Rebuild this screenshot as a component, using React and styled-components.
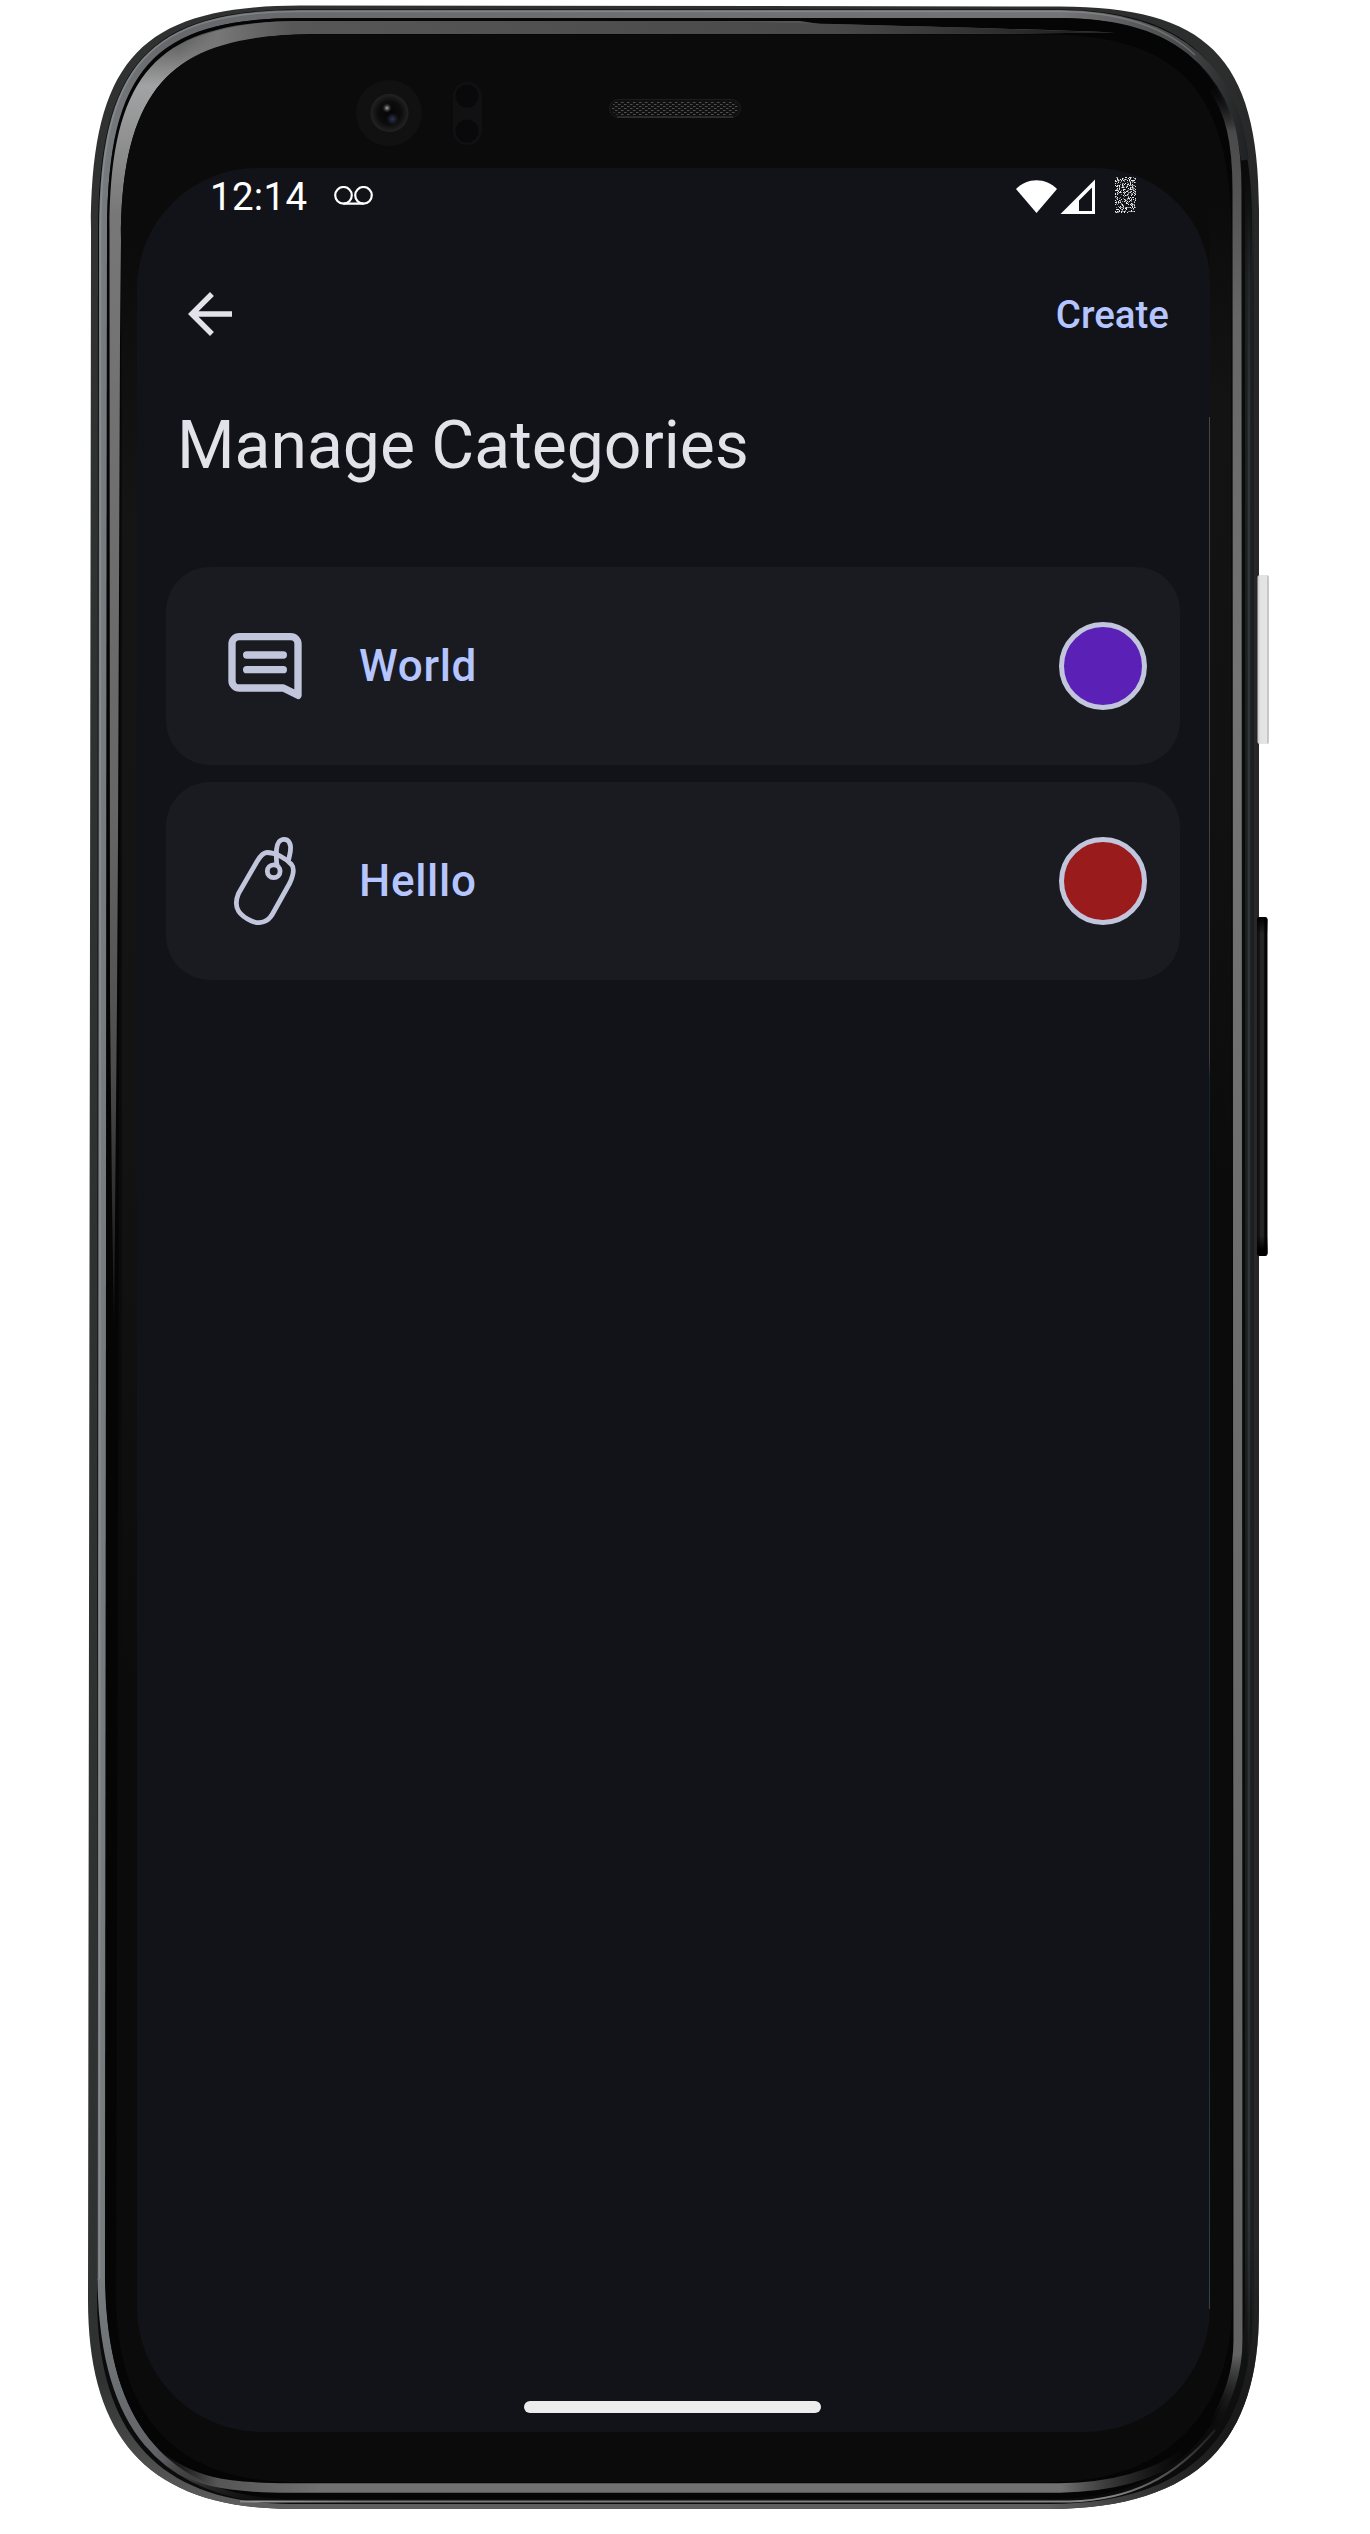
import React from 'react';
import styled, { createGlobalStyle } from 'styled-components';

const GlobalStyle = createGlobalStyle`
  html, body { margin: 0; padding: 0; background: #ffffff; }
  * { box-sizing: border-box; }
`;

const Page = styled.main`
  position: relative;
  width: 1370px;
  height: 2534px;
  padding: 168px 160px 102px 137px;
  overflow: hidden;
  background: #ffffff;
  font-family: Roboto, "Liberation Sans", sans-serif;
`;

const Hardware = styled.svg`
  position: absolute;
  inset: 0;
  width: 1370px;
  height: 2534px;
`;

const Screen = styled.section`
  position: relative;
  display: flex;
  flex-direction: column;
  height: 2264px;
  overflow: hidden;
  border-radius: 120px 115px 125px 125px;
  background: #121318;
`;

const StatusBar = styled.header`
  display: flex;
  align-items: center;
  justify-content: space-between;
  height: 56px;
  padding: 0 73px 0 73px;
`;

const StatusGroup = styled.div`
  display: flex;
  align-items: center;
`;

const Clock = styled.span`
  width: 124px;
  padding-top: 1px;
  color: #ffffff;
  font-size: 38.5px;
  line-height: 56px;
  letter-spacing: 0.3px;
`;

const StatusIcons = styled.svg`
  display: block;
`;

const AppBar = styled.nav`
  display: flex;
  align-items: center;
  justify-content: space-between;
  height: 178px;
  padding: 2px 41px 0 40px;
`;

const IconButton = styled.button`
  display: flex;
  padding: 0;
  border: 0;
  background: none;
  color: #e3e1e9;
`;

const TextButton = styled.button`
  padding: 2px 0 0;
  border: 0;
  background: none;
  color: #b4c5ff;
  font: 500 38.5px/56px Roboto, "Liberation Sans", sans-serif;
`;

const Title = styled.h1`
  margin: 0;
  padding: 4px 40px 0;
  height: 165px;
  color: #e3e1e9;
  font-size: 66px;
  font-weight: 400;
  line-height: 80px;
`;

const CategoryList = styled.ul`
  display: flex;
  flex-direction: column;
  gap: 17px;
  margin: 0;
  padding: 0 30px 0 29px;
  list-style: none;
`;

const CategoryCard = styled.li`
  display: flex;
  align-items: center;
  height: 198px;
  padding: 0 33px 0 55px;
  border-radius: 44px;
  background: #1a1b20;
  color: #c2c6dd;
`;

const CategoryName = styled.span`
  flex: 1;
  padding-left: 50px;
  color: #b4c5ff;
  font-size: 44px;
  font-weight: 500;
  line-height: 66px;
  letter-spacing: 0.7px;
`;

const Swatch = styled.span`
  width: 88px;
  height: 88px;
  border: 5px solid #c2c6dd;
  border-radius: 50%;
  background: ${(p) => p.$color};
`;

const HomeIndicator = styled.div`
  width: 297px;
  height: 12px;
  margin: auto auto 19px 387px;
  border-radius: 6px;
  background: #ededed;
`;

const CommentIcon = () => (
  <svg width="88" height="88" viewBox="0 0 24 24" fill="none" stroke="currentColor" strokeWidth="2" strokeLinecap="round" strokeLinejoin="round">
    <path d="M21 20V6a2 2 0 0 0-2-2H5a2 2 0 0 0-2 2v10a2 2 0 0 0 2 2h12z" />
    <path d="M7 9h10M7 13h10" />
  </svg>
);

const TagIcon = () => (
  <svg width="88" height="88" viewBox="0 0 88 88" fill="none" stroke="currentColor" strokeWidth="4.8" strokeLinecap="round" strokeLinejoin="round">
    <path d="M36 24.5C39 19.5 42 15.5 46 15.5C54 15.5 64 20.5 70.5 27.5C74 31.5 71.5 40 68.8 46L51.5 77C47.5 84 40 88 30.5 84C20 79 11 72 17.5 56.5Z" />
    <circle cx="52.7" cy="34.3" r="6.4" />
    <path d="M56 28C55.3 24 55.2 18 55.5 12.5C56 6 59 2.4 63 2.4C68 2.4 70.3 7 69.4 14C69 17 68.5 19 67.8 21.8" />
  </svg>
);

const ArrowBack = () => (
  <svg width="66" height="66" viewBox="0 0 24 24" fill="currentColor">
    <path d="M20 11H7.83l5.59-5.59L12 4l-8 8 8 8 1.41-1.41L7.83 13H20v-2z" />
  </svg>
);

const VoicemailIcon = () => (
  <StatusIcons width="40" height="20" viewBox="0 0 40 20" fill="none" stroke="#ffffff" strokeWidth="2.2">
    <circle cx="9.5" cy="9.3" r="8.3" />
    <circle cx="29.5" cy="9.3" r="8.3" />
    <path d="M9.5 17.6h20" />
  </StatusIcons>
);

// Speckled battery glyph: a fixed pseudo-random sequence keeps it stable between renders.
const batteryDots = (() => {
  let seed = 71;
  const dots = [];
  for (let y = 0; y < 36; y += 1) {
    for (let x = 0; x < 21; x += 1) {
      seed = (seed * 1103515245 + 12345) % 2147483648;
      const v = seed / 2147483648;
      if (v > 0.6) dots.push([x, y, v > 0.8 ? 0.9 : 0.5]);
    }
  }
  return dots;
})();

const SignalIcons = () => (
  <StatusIcons width="121" height="38" viewBox="0 0 121 38">
    <path d="M0 12C11 .2 30 .2 41 12L20.5 36z" fill="#ffffff" />
    <path fillRule="evenodd" d="M44.5 37L79 2.5V37zM63 34H76V10.5L63 23.5z" fill="#ffffff" />
    <g fill="#ffffff">
      {batteryDots.map(([x, y, o]) => (
        <rect key={`${x}-${y}`} x={99 + x} y={y} width="1" height="1" opacity={o} />
      ))}
    </g>
  </StatusIcons>
);

const PhoneHardware = () => (
  <Hardware viewBox="0 0 1370 2534" fill="none">
    <defs>
      <linearGradient id="shell" x1="88" y1="0" x2="1259" y2="0" gradientUnits="userSpaceOnUse">
        <stop offset="0" stopColor="#303131" />
        <stop offset="0.97" stopColor="#2c2d2d" />
        <stop offset="1" stopColor="#272727" />
      </linearGradient>
      <linearGradient id="shellBase" x1="0" y1="2380" x2="0" y2="2509" gradientUnits="userSpaceOnUse">
        <stop offset="0" stopColor="#5c5c5c" stopOpacity="0" />
        <stop offset="1" stopColor="#5e5f5e" />
      </linearGradient>
      <linearGradient id="shellSide" x1="1050" y1="0" x2="1230" y2="0" gradientUnits="userSpaceOnUse">
        <stop offset="0" stopColor="#111" stopOpacity="0" />
        <stop offset="1" stopColor="#1a1a1a" />
      </linearGradient>
      <linearGradient id="shellSideFade" x1="0" y1="2250" x2="0" y2="2400" gradientUnits="userSpaceOnUse">
        <stop offset="0" stopColor="#ffffff" stopOpacity="0" />
        <stop offset="1" stopColor="#ffffff" />
      </linearGradient>
      <mask id="sideMask" maskUnits="userSpaceOnUse" x="1000" y="2200" width="300" height="334">
        <rect x="1000" y="2200" width="300" height="334" fill="url(#shellSideFade)" />
      </mask>
      <linearGradient id="rail" x1="99" y1="0" x2="1247" y2="0" gradientUnits="userSpaceOnUse">
        <stop offset="0" stopColor="#777c7f" />
        <stop offset="0.06" stopColor="#66686b" />
        <stop offset="0.84" stopColor="#747477" />
        <stop offset="0.94" stopColor="#4a4b4d" />
        <stop offset="1" stopColor="#1f2122" />
      </linearGradient>
      <linearGradient id="railBase" x1="98" y1="2280" x2="270" y2="2502" gradientUnits="userSpaceOnUse">
        <stop offset="0" stopColor="#777c7f" />
        <stop offset="0.65" stopColor="#606165" />
        <stop offset="1" stopColor="#222222" stopOpacity="0" />
      </linearGradient>
      <linearGradient id="gleamLeft" x1="0" y1="34" x2="0" y2="1330" gradientUnits="userSpaceOnUse">
        <stop offset="0" stopColor="#555555" />
        <stop offset="0.04" stopColor="#a2a3a4" />
        <stop offset="0.14" stopColor="#777777" />
        <stop offset="0.6" stopColor="#666666" />
        <stop offset="0.8" stopColor="#4c4c4c" />
        <stop offset="1" stopColor="#111111" />
      </linearGradient>
      <linearGradient id="gleamTop" x1="180" y1="0" x2="1115" y2="0" gradientUnits="userSpaceOnUse">
        <stop offset="0" stopColor="#8b8c8c" stopOpacity="0" />
        <stop offset="0.04" stopColor="#777777" />
        <stop offset="0.12" stopColor="#575757" />
        <stop offset="0.7" stopColor="#494949" />
        <stop offset="1" stopColor="#1b1b1b" />
      </linearGradient>
      <linearGradient id="gleamRight" x1="0" y1="85" x2="0" y2="2425" gradientUnits="userSpaceOnUse">
        <stop offset="0" stopColor="#111111" stopOpacity="0" />
        <stop offset="0.02" stopColor="#4a4a4a" />
        <stop offset="0.1" stopColor="#666666" />
        <stop offset="0.25" stopColor="#747474" />
        <stop offset="0.97" stopColor="#636363" />
        <stop offset="1" stopColor="#181818" stopOpacity="0" />
      </linearGradient>
      <linearGradient id="gleamBase" x1="155" y1="0" x2="1185" y2="0" gradientUnits="userSpaceOnUse">
        <stop offset="0" stopColor="#333333" stopOpacity="0" />
        <stop offset="0.06" stopColor="#555555" />
        <stop offset="0.16" stopColor="#707070" />
        <stop offset="0.88" stopColor="#707070" />
        <stop offset="1" stopColor="#333333" stopOpacity="0" />
      </linearGradient>
      <linearGradient id="hairBase" x1="150" y1="0" x2="1220" y2="0" gradientUnits="userSpaceOnUse">
        <stop offset="0" stopColor="#222222" />
        <stop offset="0.1" stopColor="#999999" />
        <stop offset="0.2" stopColor="#777877" />
        <stop offset="0.9" stopColor="#858585" />
        <stop offset="1" stopColor="#1a1a1a" />
      </linearGradient>
      <linearGradient id="bezelLight" x1="0" y1="240" x2="0" y2="1700" gradientUnits="userSpaceOnUse">
        <stop offset="0" stopColor="#151515" stopOpacity="0" />
        <stop offset="0.2" stopColor="#151515" />
        <stop offset="0.6" stopColor="#131313" />
        <stop offset="1" stopColor="#131313" stopOpacity="0" />
      </linearGradient>
      <linearGradient id="bezelRight" x1="0" y1="200" x2="0" y2="1200" gradientUnits="userSpaceOnUse">
        <stop offset="0" stopColor="#131313" stopOpacity="0" />
        <stop offset="0.2" stopColor="#131313" />
        <stop offset="0.6" stopColor="#111111" />
        <stop offset="1" stopColor="#111111" stopOpacity="0" />
      </linearGradient>
      <linearGradient id="railSide" x1="0" y1="170" x2="0" y2="2480" gradientUnits="userSpaceOnUse">
        <stop offset="0" stopColor="#1c1f20" stopOpacity="0" />
        <stop offset="0.05" stopColor="#1c1f20" />
        <stop offset="0.9" stopColor="#1c1f20" />
        <stop offset="1" stopColor="#111111" stopOpacity="0" />
      </linearGradient>
      <linearGradient id="railSideLine" x1="0" y1="200" x2="0" y2="2380" gradientUnits="userSpaceOnUse">
        <stop offset="0" stopColor="#303536" stopOpacity="0" />
        <stop offset="0.1" stopColor="#303536" />
        <stop offset="0.92" stopColor="#303536" />
        <stop offset="1" stopColor="#303536" stopOpacity="0" />
      </linearGradient>
      <radialGradient id="lens">
        <stop offset="0" stopColor="#050505" />
        <stop offset="0.6" stopColor="#0c0c0d" />
        <stop offset="1" stopColor="#232324" />
      </radialGradient>
      <radialGradient id="lensBlue">
        <stop offset="0" stopColor="#2d3555" />
        <stop offset="1" stopColor="#1a1e30" stopOpacity="0.3" />
      </radialGradient>
      <radialGradient id="glint">
        <stop offset="0" stopColor="#b0b0b0" />
        <stop offset="1" stopColor="#222222" stopOpacity="0" />
      </radialGradient>
      <linearGradient id="powerKey" x1="1258" y1="0" x2="1269" y2="0" gradientUnits="userSpaceOnUse">
        <stop offset="0" stopColor="#c9c9c9" />
        <stop offset="0.2" stopColor="#e2e2e2" />
        <stop offset="0.8" stopColor="#e5e5e5" />
        <stop offset="0.88" stopColor="#bdbdbd" />
        <stop offset="1" stopColor="#d2d2d2" />
      </linearGradient>
      <linearGradient id="volumeKey" x1="1257" y1="0" x2="1267.5" y2="0" gradientUnits="userSpaceOnUse">
        <stop offset="0" stopColor="#0c0c0c" />
        <stop offset="0.25" stopColor="#161616" />
        <stop offset="0.35" stopColor="#272727" />
        <stop offset="0.65" stopColor="#232323" />
        <stop offset="0.75" stopColor="#030303" />
        <stop offset="1" stopColor="#080808" />
      </linearGradient>
      <linearGradient id="volumeEnds" x1="0" y1="917" x2="0" y2="1256" gradientUnits="userSpaceOnUse">
        <stop offset="0" stopColor="#000000" />
        <stop offset="0.05" stopColor="#000000" stopOpacity="0" />
        <stop offset="0.94" stopColor="#000000" stopOpacity="0" />
        <stop offset="0.98" stopColor="#000000" />
      </linearGradient>
      <pattern id="mesh" width="6" height="4" patternUnits="userSpaceOnUse">
        <path d="M0 .5h2.500M3 2.5h2.500" stroke="#505050" strokeWidth="1.2" />
      </pattern>
    </defs>

    <path d="M91 230C91 60 140 6 300 5.5L1060 6.5C1205 7 1259 55 1259 210V2310C1259 2440 1200 2508 1050 2509H290C148 2508 88 2438 88 2300Z" fill="url(#shell)" />
    <path d="M88 2300C88 2438 148 2508 290 2509H1050C1200 2508 1259 2440 1259 2310Z" fill="url(#shellBase)" />
    <path d="M1040 2509H1050C1200 2508 1259 2440 1259 2310V2250H1040Z" fill="url(#shellSide)" mask="url(#sideMask)" />

    <path d="M98 230C99 66 147 9.5 300 9.5H1060C1192 11 1247 68 1252 210V2310C1252 2432 1195 2503 1050 2504H290C155 2503 98 2430 97 2300Z" fill="#0b0b0b" />
    <path d="M101.5 2280L103 230C103.500 68 150 14 300 14H1060C1185 15 1236 75 1245 160" stroke="url(#rail)" strokeWidth="8" />
    <path d="M99.500 2280L100.500 230C101 66 148 11.500 300 11.500H1060C1120 12 1165 27 1195 55" stroke="#a0a3a5" strokeOpacity="0.4" strokeWidth="1.6" />
    <path d="M101.500 2279C103 2425 160 2495 290 2501" stroke="url(#railBase)" strokeWidth="8" />
    <path d="M249 2501" />
    <path d="M1249.500 170V2310C1248 2400 1215 2455 1160 2478" stroke="url(#railSide)" strokeWidth="9" />
    <rect x="1247.700" y="200" width="2.500" height="2180" fill="url(#railSideLine)" />
    <path d="M240 2501.500H1070C1130 2500 1175 2478 1215 2430" stroke="url(#hairBase)" strokeWidth="2" />

    <path d="M107 230C108 72 153 18 300 18H1060C1180 19 1233 68 1242 190V2310C1241 2420 1180 2499 1050 2499H290C165 2497 107 2420 105 2280Z" fill="#050505" />
    <path d="M109.500 230C110 75 155 21 300 21H800L820 24Q1000 28 1115 32.500Q1000 34 860 34H310C175 34 121 85 121 240L120 340L118 840L117 1000L114 1330L112 1200L110 1000Z" fill="url(#gleamLeft)" />
    <path d="M180 44.500Q225 21.500 300 21H700Q900 25 1115 32.500Q1000 34 860 34H310Q235 34 180 66Z" fill="url(#gleamTop)" />
    <path d="M116 2300L121 240C121 85 175 34.500 310 34.500H1060C1180 40 1232 90 1232 240V2310C1230 2410 1170 2482 1050 2482H290C170 2480 118 2410 116 2300Z" fill="#0b0b0b" />
    <path d="M1213 88C1230 112 1237 142 1237 190L1238 2340C1238 2374 1227 2400 1214 2423" stroke="url(#gleamRight)" strokeWidth="9" />
    <path d="M155 2452C190 2482 225 2488 290 2488H1060C1115 2487 1155 2475 1185 2453" stroke="url(#gleamBase)" strokeWidth="9.500" />
    <rect x="122" y="240" width="16" height="1460" fill="url(#bezelLight)" />
    <rect x="1209" y="200" width="22" height="1000" fill="url(#bezelRight)" />

    <rect x="1257.500" y="575" width="11.500" height="169" rx="2.500" fill="url(#powerKey)" />
    <rect x="1257" y="917" width="10.500" height="339" rx="3" fill="url(#volumeKey)" />
    <rect x="1257" y="917" width="10.500" height="339" rx="3" fill="url(#volumeEnds)" />

    <circle cx="389" cy="113" r="33" fill="#111111" />
    <circle cx="389.500" cy="113" r="19" fill="url(#lens)" />
    <circle cx="392.500" cy="119" r="5.500" fill="url(#lensBlue)" />
    <circle cx="387" cy="108" r="5" fill="url(#glint)" />
    <rect x="453" y="82" width="29" height="63" rx="14.500" fill="#111111" />
    <circle cx="467" cy="96" r="11.500" fill="#09090b" />
    <circle cx="467" cy="131" r="11.500" fill="#09090b" />

    <rect x="609.500" y="99.500" width="131" height="18" rx="9" fill="#101010" stroke="#1c1c1c" />
    <rect x="612" y="101" width="126" height="14" rx="7" fill="url(#mesh)" />
    <path d="M617 117H733" stroke="#404040" />
  </Hardware>
);

const GlassEdge = styled.i`
  position: absolute;
  top: 249px;
  right: 0;
  width: 1px;
  height: 1892px;
  background: linear-gradient(#44464a 0%, #3a3c40 34%, #142231 35%, #142231 75%, #35404a 100%);
`;

const categories = [
  { name: 'World', color: '#5b21b6', Icon: CommentIcon },
  { name: 'Helllo', color: '#991b1b', Icon: TagIcon },
];

export default function App() {
  return (
    <>
      <GlobalStyle />
      <Page>
        <PhoneHardware />
        <Screen>
          <StatusBar>
            <StatusGroup>
              <Clock>12:14</Clock>
              <VoicemailIcon />
            </StatusGroup>
            <SignalIcons />
          </StatusBar>
          <AppBar>
            <IconButton aria-label="Back"><ArrowBack /></IconButton>
            <TextButton>Create</TextButton>
          </AppBar>
          <Title>Manage Categories</Title>
          <CategoryList>
            {categories.map(({ name, color, Icon }) => (
              <CategoryCard key={name}>
                <Icon />
                <CategoryName>{name}</CategoryName>
                <Swatch $color={color} />
              </CategoryCard>
            ))}
          </CategoryList>
          <HomeIndicator />
          <GlassEdge />
        </Screen>
      </Page>
    </>
  );
}
